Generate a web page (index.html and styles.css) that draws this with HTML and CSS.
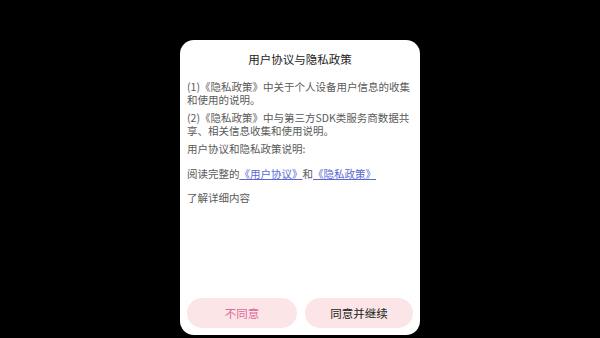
FILE: index.html
```html
<!DOCTYPE html>
<html>
    <head>
        <meta name="viewport" content="width=device-width, initial-scale=1">
        <link rel="stylesheet" href="styles.css">
    </head>
    <body>
        <div class="screen">
            <div class="dialog">
                <h1 class="title">用户协议与隐私政策</h1>
                <div class="content">
                    <p>(1)《隐私政策》中关于个人设备用户信息的收集和使用的说明。</p>
                    <p>(2)《隐私政策》中与第三方SDK类服务商数据共享、相关信息收集和使用说明。</p>
                    <p>用户协议和隐私政策说明:</p>
                    <p class="read">阅读完整的<a href="#">《用户协议》</a>和<a href="#">《隐私政策》</a></p>
                    <p class="more">了解详细内容</p>
                </div>
                <div class="buttons">
                    <button class="btn btn-no">不同意</button>
                    <button class="btn btn-yes">同意并继续</button>
                </div>
            </div>
        </div>
    </body>
</html>
```

FILE: styles.css
```css
html, body {
margin: 0;
padding: 0;
background: #000;
}

body {
font-family: "Noto Sans CJK SC", "Noto Sans", sans-serif;
}

.screen {
width: 600px;
height: 338px;
display: flex;
justify-content: center;
overflow: hidden;
}

.dialog {
width: 240px;
height: 295px;
margin-top: 40px;
background: #fff;
border-radius: 14px;
display: flex;
flex-direction: column;
box-sizing: border-box;
padding: 0 7px 7px 7px;
}

.title {
font-size: 11.5px;
font-weight: normal;
color: #222;
text-align: center;
margin: 11px 0 0 0;
line-height: 16px;
}

.content {
margin-top: 13px;
color: #5a5a5a;
font-size: 10.5px;
line-height: 13px;
}

.content p {
margin: 0 0 5px 0;
}

.content .read {
margin-top: 12px;
margin-bottom: 11px;
}

.content a {
color: #5a68d6;
text-decoration: underline;
}

.buttons {
margin-top: auto;
display: flex;
justify-content: space-between;
}

.btn {
width: 110px;
height: 30px;
border: none;
border-radius: 15px;
background: #fbe5e7;
font-family: inherit;
font-size: 11.5px;
padding: 0;
}

.btn-no {
color: #e0689a;
}

.btn-yes {
width: 108px;
color: #222;
}
```
